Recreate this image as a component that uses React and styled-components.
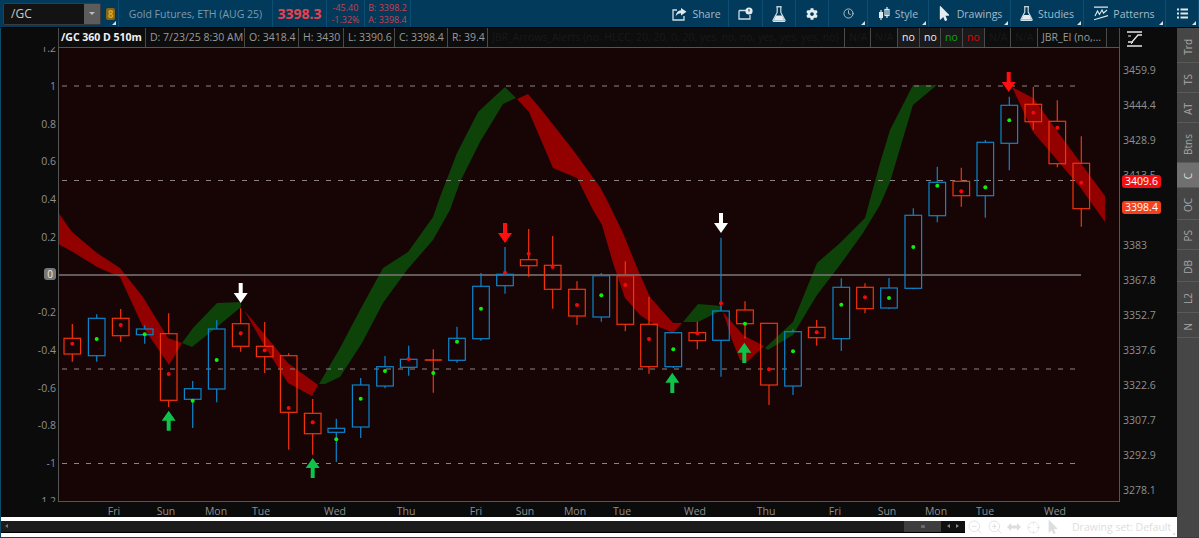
import React from "react";
import styled, { createGlobalStyle } from "styled-components";
import { FaCog, FaMousePointer } from "react-icons/fa";
import { ZoomIn, ZoomOut, Crosshair, Clock } from "lucide-react";

const GlobalStyle = createGlobalStyle`
  html, body { margin: 0; padding: 0; background: #0b0b0b; }
  body { font-family: "Open Sans", "Liberation Sans", sans-serif; overflow: hidden; }
  * { box-sizing: border-box; }
`;

const Page = styled.div`
  width: 1199px;
  height: 538px;
  display: flex;
  flex-direction: column;
  background: #0b0b0b;
  overflow: hidden;
  border-bottom: 1px solid #0b4a68;
`;

/* top toolbar */
const TopBar = styled.div`
  height: 27px;
  flex: none;
  display: flex;
  background: #013a5b;
`;

const Segment = styled.div`
  width: ${(p) => p.$w}px;
  flex: none;
  display: flex;
  align-items: center;
  justify-content: ${(p) => p.$justify || "center"};
  gap: ${(p) => p.$gap ?? 5}px;
  border-right: 1px solid #0d4e72;
  position: relative;
  color: #a4bac8;
  font-size: 10.5px;

  ${(p) =>
    p.$corner &&
    `&::after {
      content: "";
      position: absolute;
      right: 2px;
      bottom: 2px;
      border-left: 4px solid transparent;
      border-bottom: 4px solid #d5e0e6;
    }`}
`;

const Spacer = styled.div`
  flex: 1;
`;

const SymbolBox = styled.div`
  width: 98px;
  height: 22px;
  margin-left: 3px;
  display: flex;
  align-items: center;
  justify-content: space-between;
  background: #131313;
  border: 1px solid #3b3b3b;
  border-radius: 2px;
  padding-left: 7px;
  color: #c9c9c9;
  font-size: 12px;
`;

const SymbolDrop = styled.div`
  width: 16px;
  height: 20px;
  background: #5c5c5c;
  display: flex;
  align-items: center;
  justify-content: center;

  &::after {
    content: "";
    border-left: 3px solid transparent;
    border-right: 3px solid transparent;
    border-top: 3px solid #bcbcbc;
  }
`;

const LinkBadge = styled.div`
  width: 9px;
  height: 12px;
  background: #8a6512;
  border-radius: 2px;
  color: #d8a92c;
  font-size: 10px;
  font-weight: 700;
  line-height: 12px;
  text-align: center;
  margin-left: 5px;
`;

const Name = styled.span`
  color: #7d9aad;
  font-size: 10.5px;
  white-space: nowrap;
`;

const Price = styled.span`
  color: #e5434f;
  font-size: 14px;
  font-weight: 700;
`;

const Stack = styled.div`
  display: flex;
  flex-direction: column;
  align-items: center;
  color: #c9414f;
  font-size: 9px;
  line-height: 12px;
  white-space: nowrap;
`;

/* chart frame */
const Main = styled.div`
  flex: 1;
  min-height: 0;
  display: flex;
  border-top: 1px solid #000;
`;

const ChartPane = styled.div`
  flex: 1;
  min-width: 0;
  display: flex;
  flex-direction: column;
  border-left: 1px solid #0b4a68;
`;

const ChartBody = styled.div`
  height: 474px;
  flex: none;
  display: flex;
`;

const LeftAxis = styled.div`
  width: 57px;
  flex: none;
  height: 455px;
  margin-top: 19px;
  overflow: hidden;
`;

const LeftGrid = styled.div`
  display: grid;
  grid-auto-rows: 37.7px;
  margin-top: -17.5px;
  justify-items: end;
  align-items: center;
  padding-right: 2px;
`;

const AxisText = styled.span`
  color: #8f8f8f;
  font-size: 10.5px;
  line-height: 12px;
`;

const ZeroBadge = styled.span`
  color: #eee;
  background: #777;
  border-radius: 3px;
  font-size: 10px;
  line-height: 12px;
  padding: 0 3px;
`;

const Center = styled.div`
  width: 1062px;
  flex: none;
  display: flex;
  flex-direction: column;
`;

const Legend = styled.div`
  height: 19px;
  flex: none;
  display: flex;
  background: #0d0d0d;
`;

const Cell = styled.div`
  width: ${(p) => p.$w}px;
  flex: none;
  border-right: 1px solid #4a4a4a;
  border-left: ${(p) => (p.$first ? "1px solid #4a4a4a" : "none")};
  padding: 0 ${(p) => (p.$first ? 2 : 4)}px;
  font-size: 10.5px;
  line-height: 18px;
  font-weight: ${(p) => (p.$bold ? 700 : 400)};
  color: ${(p) => p.$color || "#9a9a9a"};
  background: ${(p) => p.$bg || "transparent"};
  text-align: ${(p) => p.$align || "left"};
  white-space: nowrap;
  overflow: hidden;
`;

const Plot = styled.div`
  height: 455px;
  flex: none;
  background: #170405;
  border: 1px solid #555;

  svg {
    display: block;
  }
`;

const RightAxis = styled.div`
  width: 57px;
  flex: none;
  position: relative;
  padding: 3px 0 0 3px;
`;

const ScaleIcon = styled.svg`
  display: block;
  width: 18px;
  height: 16px;
  margin: 0 0 5.5px 3px;
`;

const PriceGrid = styled.div`
  display: grid;
  grid-auto-rows: 35.04px;
  align-items: center;
`;

const PriceTag = styled.div`
  position: absolute;
  left: 2px;
  top: ${(p) => p.$top}px;
  width: 39px;
  height: 13px;
  border-radius: 3px;
  background: ${(p) => p.$bg};
  color: #fff;
  font-size: 10.5px;
  line-height: 13px;
  text-align: center;
`;

const SideTabs = styled.div`
  width: 22px;
  flex: none;
  display: flex;
  flex-direction: column;
  background: #464646;
`;

const SideTab = styled.div`
  height: ${(p) => p.$h}px;
  flex: none;
  display: flex;
  align-items: center;
  justify-content: center;
  padding-top: 3px;
  border-bottom: 1px solid #5a5a5a;
  background: ${(p) => (p.$active ? "#707070" : "transparent")};
  color: ${(p) => (p.$active ? "#ddd" : "#a8a8a8")};
  font-size: 10px;

  span {
    writing-mode: vertical-rl;
    transform: rotate(180deg);
  }
`;

const TimeAxis = styled.div`
  height: 15px;
  flex: none;
  display: flex;
  padding-left: 93px;
  background: #0b0b0b;
`;

const TimeTick = styled.span`
  width: 40px;
  flex: none;
  margin-right: ${(p) => p.$gap}px;
  text-align: center;
  color: #8f8f8f;
  font-size: 10.5px;
  line-height: 18px;
`;

const Footer = styled.div`
  height: 20px;
  flex: none;
  display: flex;
  align-items: flex-start;
  background: #fff;
  position: relative;

  &::after {
    content: "";
    position: absolute;
    right: 2px;
    bottom: 2px;
    border-left: 3px solid transparent;
    border-bottom: 3px solid #ddd;
  }
`;

const Scrollbar = styled.div`
  width: 964px;
  height: 12px;
  flex: none;
  margin-top: 3.5px;
  display: flex;
  align-items: stretch;
  background: #1c1c1c;
  border-bottom: 1px solid #000;
`;

const ScrollLeft = styled.div`
  flex: 1;
  padding: 3px 0 0 4px;

  &::after {
    content: "";
    display: block;
    width: 0;
    border-top: 2px solid transparent;
    border-bottom: 2px solid transparent;
    border-right: 3px solid #777;
  }
`;

const Thumb = styled.div`
  width: 37px;
  background: #3e3e3e;
  display: flex;
  align-items: center;
  justify-content: center;

  &::after {
    content: "";
    width: 4px;
    height: 3px;
    background: #6a6a6a;
  }
`;

const ScrollEnd = styled.div`
  width: 24px;
  background: #101010;
  display: flex;
  align-items: center;
  justify-content: center;
  gap: 6px;
`;

const Tri = styled.i`
  border-top: 2px solid transparent;
  border-bottom: 2px solid transparent;
  border-left: ${(p) => (p.$right ? "3px solid #888" : "0")};
  border-right: ${(p) => (p.$right ? "0" : "3px solid #888")};
`;

const Tools = styled.div`
  flex: 1;
  height: 20px;
  display: flex;
  align-items: center;
  gap: 4px;
  padding-left: 2px;
  color: #dedede;
`;

const ToolSlot = styled.span`
  display: flex;
  margin-left: ${(p) => p.$ml}px;
`;

const DrawingSet = styled.span`
  margin-left: 8px;
  font-size: 10.5px;
  color: #dedede;
  white-space: nowrap;
`;

const Glyph = styled.svg`
  display: block;
  flex: none;
`;

/* x, wick top, wick bottom, body top, body bottom, dot, up candle, green dot */
const candles = [
  [72.3, 324, 361.7, 338.3, 354, 343.7, 0, 0],
  [96.7, 314.3, 361.7, 318.3, 355.7, 339, 1, 1],
  [120.7, 309, 341.7, 318.3, 335.7, 325, 0, 0],
  [144.7, 325.3, 343.7, 329, 334.7, 334.3, 1, 1],
  [168.7, 313.3, 407, 333.7, 400.3, 374, 0, 0],
  [192.7, 381, 428, 388.7, 399.3, 400.7, 1, 1],
  [216.7, 320.3, 402.3, 329, 389, 360, 1, 1],
  [240.7, 308.3, 351.7, 323.7, 346.3, 333.3, 0, 0],
  [264.7, 322, 373, 346.3, 356.7, 350.3, 0, 0],
  [288.7, 353.3, 449.7, 355.7, 412.3, 408, 0, 0],
  [312.7, 399, 454.7, 413.3, 433.7, 422.3, 0, 0],
  [336.3, 418.7, 462, 428.3, 432.3, 439.3, 1, 1],
  [360.7, 378, 438, 385, 427, 398.7, 1, 1],
  [385, 356, 388.3, 366.7, 386, 371, 1, 1],
  [408.7, 345.7, 375.7, 359.3, 367.3, 359, 1, 0],
  [433.3, 349.3, 392.7, 360, 360, 373, 0, 1],
  [457, 326.7, 362.7, 338.3, 360.3, 341.7, 1, 1],
  [481, 273, 340.7, 286.3, 338.7, 308.7, 1, 1],
  [505, 247, 293.7, 274.3, 285.7, 272.7, 1, 0],
  [528.7, 229, 276.7, 259.7, 265.7, 253.7, 0, 0],
  [552.7, 236, 308.7, 265.3, 289.3, 267, 0, 0],
  [577, 281.3, 325, 289.3, 316, 305, 0, 0],
  [601.3, 273, 321.7, 275.7, 317, 295.3, 1, 1],
  [625.3, 261.3, 331.3, 275.7, 324.3, 285, 0, 0],
  [649, 296.7, 373.7, 324.3, 366.7, 339, 0, 0],
  [673.3, 332.7, 368, 332.7, 366.7, 349.3, 1, 1],
  [697.3, 321.7, 349.3, 332.7, 340.7, 333.3, 0, 0],
  [721, 237.7, 376.7, 311, 340.3, 303.3, 1, 0],
  [745, 301.3, 338.7, 310, 323.7, 323.7, 0, 1],
  [769, 323.3, 405, 323.3, 385, 369.3, 0, 0],
  [793, 329.3, 395, 331.7, 386, 351.3, 1, 1],
  [816.7, 320, 345.7, 327.3, 337.7, 332.3, 0, 0],
  [841.3, 278.3, 351, 287.3, 338.7, 304.7, 1, 1],
  [865, 283.3, 313.3, 287.3, 308.7, 297.3, 0, 0],
  [889, 278, 309, 288, 308, 298, 1, 1],
  [913.3, 208.3, 289.3, 215.3, 288.3, 247, 1, 1],
  [937.3, 166.7, 222.3, 182.3, 215.7, 185.7, 1, 1],
  [961.3, 167.7, 206.7, 181.3, 195.7, 191.3, 0, 0],
  [985.3, 140, 217.7, 142.3, 195.7, 187.3, 1, 1],
  [1009.3, 96.7, 170.3, 105.3, 143.3, 120.3, 1, 1],
  [1033.3, 87, 129.7, 104.3, 121.7, 112.7, 0, 0],
  [1057.3, 100.3, 167.3, 121.3, 163.7, 127.7, 0, 0],
  [1081.3, 136.3, 226.7, 163.3, 208.7, 182.7, 0, 0],
];

const redBands = [
  "58,212 72,232 97,253 120,268 143,297 168,338 182,343 169,365 143,327 120,277 97,267 73,252 58,244",
  "244,310 265,335 288,363 318,385 312,396 288,383 265,347",
  "517,99 528,94 540,108 573,150 600,187 607,200 623,233 638,270 650,297 673,323 682,323 673,333 655,325 640,315 625,298 613,263 602,225 593,210 577,178 553,168 529,112",
  "723,312 743,335 764,346 747,362 740,360 732,340",
  "1012,87 1033,98 1105,196 1105,222 1080,187 1057,160 1033,132",
];

const greenBands = [
  "182,343 193,328 217,303 241,302 241,307 217,327 192,347",
  "319,384 340,348 360,310 383,268 408,252 433,217 440,197 457,153 478,112 493,98 505,87 516,98 503,104 480,142 460,182 450,210 433,240 407,270 383,303 362,343 340,377 325,384",
  "683,322 698,304 722,306 722,310 698,322",
  "765,348 793,322 817,263 840,243 865,218 880,163 890,130 913,85 937,85 913,105 890,182 880,205 863,233 840,265 817,295 793,335 768,350",
];

const arrows = [
  [168.7, 410.7, 430.7, "up", "#0fc24a"],
  [312.7, 458, 478, "up", "#0fc24a"],
  [672.3, 372.7, 393, "up", "#0fc24a"],
  [744.3, 342.7, 363, "up", "#0fc24a"],
  [240.7, 283, 303, "down", "#ffffff"],
  [721, 213, 233, "down", "#ffffff"],
  [505, 223, 243, "down", "#ff0f0f"],
  [1008.7, 72, 92, "down", "#ff0f0f"],
];

const arrowPoints = (x, top, bottom, dir) => {
  if (dir === "up") {
    return `${x},${top} ${x + 7},${top + 10} ${x + 2},${top + 10} ${x + 2},${bottom} ${x - 2},${bottom} ${x - 2},${top + 10} ${x - 7},${top + 10}`;
  }
  return `${x - 2},${top} ${x + 2},${top} ${x + 2},${bottom - 10} ${x + 7},${bottom - 10} ${x},${bottom} ${x - 7},${bottom - 10} ${x - 2},${bottom - 10}`;
};

const Chart = () => (
  <svg width="1060" height="453" viewBox="59 48 1060 453">
    {redBands.map((pts) => (
      <polygon key={pts} points={pts} fill="#920000" />
    ))}
    {greenBands.map((pts) => (
      <polygon key={pts} points={pts} fill="#0d4208" />
    ))}
    {[86, 180.5, 369, 463.5].map((y) => (
      <line key={y} x1="62" x2="1078" y1={y} y2={y} stroke="#8a8484" strokeWidth="1" strokeDasharray="5 7" />
    ))}
    <line x1="59" x2="1081" y1="275" y2="275" stroke="#7d7878" strokeWidth="1.5" />
    {candles.map(([x, wt, wb, bt, bb, dot, up, green]) => {
      const color = up ? "#0b86cc" : "#f5330a";
      return (
        <g key={x}>
          <line x1={x} x2={x} y1={wt} y2={bt} stroke={color} strokeWidth="1.2" />
          <line x1={x} x2={x} y1={bb} y2={wb} stroke={color} strokeWidth="1.2" />
          {bt === bb ? (
            <line x1={x - 8.5} x2={x + 8.5} y1={bt} y2={bt} stroke={color} strokeWidth="1.6" />
          ) : (
            <rect x={x - 8.3} y={bt} width="16.6" height={bb - bt} fill="none" stroke={color} strokeWidth="1.2" />
          )}
          <circle cx={x} cy={dot} r="2" fill={green ? "#0cf00c" : "#f50a0a"} />
        </g>
      );
    })}
    {arrows.map(([x, top, bottom, dir, color]) => (
      <polygon key={x} points={arrowPoints(x, top, bottom, dir)} fill={color} />
    ))}
  </svg>
);

const ShareIcon = () => (
  <Glyph width="15" height="14" viewBox="0 0 15 14" fill="none">
    <path d="M5 3H1v10h11V9" stroke="#cfdbe2" strokeWidth="1.3" />
    <path d="M9 1l5.5 3.8L9 8.5V6.3C6.5 6.3 5 7.2 3.6 9.6 4 5.8 6 3.6 9 3.3z" fill="#dfe8ed" />
  </Glyph>
);

const PanelIcon = () => (
  <Glyph width="15" height="13" viewBox="0 0 15 13" fill="none">
    <path d="M1 3.5h9M1 3.5v8.500h11V8" stroke="#cfdbe2" strokeWidth="1.3" />
    <circle cx="11" cy="4" r="3.6" fill="#e4ecf0" />
    <path d="M11 2v2.600" stroke="#013a5b" strokeWidth="1" />
  </Glyph>
);

const FlaskIcon = ({ size = 15 }) => (
  <Glyph width={size - 2} height={size} viewBox="0 0 13 15" fill="none">
    <path d="M4 .7h5" stroke="#d6e1e7" strokeWidth="1.2" />
    <path d="M4.800 1v5L1 13.200c-.3.7 0 1.300.8 1.300h9.400c.8 0 1.100-.6.8-1.300L8.200 6V1" stroke="#d6e1e7" strokeWidth="1.1" />
    <path d="M3.600 9h5.800l2.200 4.800H1.400z" fill="#e4ecf0" />
  </Glyph>
);

const CandlesIcon = () => (
  <Glyph width="12" height="14" viewBox="0 0 12 14" fill="none">
    <path d="M3 3v10M9 0v11" stroke="#dfe8ed" strokeWidth="1.2" />
    <rect x="1" y="5" width="4" height="6" fill="#dfe8ed" />
    <rect x="7" y="2.500" width="4" height="6" fill="none" stroke="#dfe8ed" strokeWidth="1.2" />
  </Glyph>
);

const PatternIcon = () => (
  <Glyph width="14" height="15" viewBox="0 0 14 15" fill="none">
    <path d="M0 1.200h14M0 13.800L14 9.500" stroke="#dfe8ed" strokeWidth="1.2" />
    <path d="M1 10l2.500-5 2 3.500L8 4l1.500 3L13 4" stroke="#dfe8ed" strokeWidth="1.1" />
  </Glyph>
);

const ListIcon = () => (
  <Glyph width="11" height="11" viewBox="0 0 11 11" fill="#dfe8ed">
    <rect x="0" y="0.5" width="2" height="2" />
    <rect x="3.5" y="0.5" width="7.5" height="2" />
    <rect x="0" y="4.5" width="2" height="2" />
    <rect x="3.5" y="4.5" width="7.5" height="2" />
    <rect x="0" y="8.5" width="2" height="2" />
    <rect x="3.5" y="8.5" width="7.5" height="2" />
  </Glyph>
);

const PanIcon = () => (
  <Glyph width="14" height="10" viewBox="0 0 14 10" fill="#dedede">
    <path d="M0 5l4-4v2.500h6V1l4 4-4 4V6.500H4V9z" />
  </Glyph>
);

const leftLabels = ["1.2", "1", "0.8", "0.6", "0.4", "0.2", "0", "-0.2", "-0.4", "-0.6", "-0.8", "-1", "-1.2"];
const priceLabels = ["3459.9", "3444.4", "3428.9", "3413.5", "", "3383", "3367.8", "3352.7", "3337.6", "3322.6", "3307.7", "3292.9", "3278.1"];

const legendCells = [
  { w: 88, text: "/GC 360 D 510m", bold: true, color: "#f2f2f2", first: true },
  { w: 99, text: "D: 7/23/25 8:30 AM" },
  { w: 54, text: "O: 3418.4" },
  { w: 45, text: "H: 3430" },
  { w: 51, text: "L: 3390.6" },
  { w: 53, text: "C: 3398.4" },
  { w: 40, text: "R: 39.4" },
  { w: 357, text: "JBR_Arrows_Alerts (no, HLCC, 20, 20, 0, 20, yes, no, no, yes, yes, yes, no)", color: "#191919" },
  { w: 26, text: "N/A", color: "#191919" },
  { w: 27, text: "N/A", color: "#191919" },
  { w: 22, text: "no", color: "#eeeeee", bg: "#1a1a1a", align: "center" },
  { w: 21, text: "no", color: "#eeeeee", bg: "#1a1a1a", align: "center" },
  { w: 22, text: "no", color: "#0aa80a", bg: "#1a1a1a", align: "center" },
  { w: 22, text: "no", color: "#d00c0c", bg: "#1a1a1a", align: "center" },
  { w: 26, text: "N/A", color: "#191919" },
  { w: 27, text: "N/A", color: "#191919" },
  { w: 69, text: "JBR_EI (no,..." },
  { w: 13, text: "" },
];

const ticks = [
  ["Fri", 114], ["Sun", 166], ["Mon", 216], ["Tue", 261], ["Wed", 335], ["Thu", 406],
  ["Fri", 476], ["Sun", 525], ["Mon", 575], ["Tue", 622], ["Wed", 695], ["Thu", 766],
  ["Fri", 835], ["Sun", 887], ["Mon", 936], ["Tue", 985], ["Wed", 1055],
];

const tabs = [
  ["Trd", 35], ["TS", 30], ["AT", 30], ["Btns", 40], ["C", 25], ["OC", 32],
  ["PS", 30], ["DB", 32], ["L2", 31], ["N", 25],
];

const App = () => (
  <Page>
    <GlobalStyle />
    <TopBar>
      <Segment $w={119} $justify="flex-start" $gap={0} $corner>
        <SymbolBox>
          /GC
          <SymbolDrop />
        </SymbolBox>
        <LinkBadge>8</LinkBadge>
      </Segment>
      <Segment $w={154}>
        <Name>Gold Futures, ETH (AUG 25)</Name>
      </Segment>
      <Segment $w={54}>
        <Price>3398.3</Price>
      </Segment>
      <Segment $w={38}>
        <Stack>
          <span>-45.40</span>
          <span>-1.32%</span>
        </Stack>
      </Segment>
      <Segment $w={46}>
        <Stack>
          <span>B: 3398.2</span>
          <span>A: 3398.4</span>
        </Stack>
      </Segment>
      <Spacer />
      <Segment $w={64}>
        <ShareIcon />
        Share
      </Segment>
      <Segment $w={34}>
        <PanelIcon />
      </Segment>
      <Segment $w={33}>
        <FlaskIcon size={16} />
      </Segment>
      <Segment $w={33}>
        <FaCog size={12} color="#e4ecf0" />
      </Segment>
      <Segment $w={39} $corner>
        <Clock size={11} color="#b8c8d2" />
      </Segment>
      <Segment $w={61} $corner>
        <CandlesIcon />
        Style
      </Segment>
      <Segment $w={82} $corner $gap={5}>
        <FaMousePointer size={15} color="#e4ecf0" />
        Drawings
      </Segment>
      <Segment $w={73} $corner>
        <FlaskIcon />
        Studies
      </Segment>
      <Segment $w={82} $corner>
        <PatternIcon />
        Patterns
      </Segment>
      <Segment $w={33} $corner>
        <ListIcon />
      </Segment>
    </TopBar>
    <Main>
      <ChartPane>
        <ChartBody>
          <LeftAxis>
            <LeftGrid>
              {leftLabels.map((l) =>
                l === "0" ? <ZeroBadge key={l}>{l}</ZeroBadge> : <AxisText key={l}>{l}</AxisText>
              )}
            </LeftGrid>
          </LeftAxis>
          <Center>
            <Legend>
              {legendCells.map((c, i) => (
                <Cell key={i} $w={c.w} $bold={c.bold} $color={c.color} $bg={c.bg} $align={c.align} $first={c.first}>
                  {c.text}
                </Cell>
              ))}
            </Legend>
            <Plot>
              <Chart />
            </Plot>
          </Center>
          <RightAxis>
            <ScaleIcon viewBox="0 0 18 16" fill="none">
              <path d="M1 1h15M1 15h15" stroke="#e6e6e6" strokeWidth="1.5" />
              <path d="M2 11h4l6-7h4" stroke="#e6e6e6" strokeWidth="1.3" />
              <path d="M2 5h3M5 13l2-2" stroke="#e6e6e6" strokeWidth="1" />
            </ScaleIcon>
            <PriceGrid>
              {priceLabels.map((p, i) => (
                <AxisText key={i}>{p}</AxisText>
              ))}
            </PriceGrid>
            <PriceTag $top={147} $bg="#f50d12">3409.6</PriceTag>
            <PriceTag $top={173} $bg="#f5401f">3398.4</PriceTag>
          </RightAxis>
        </ChartBody>
        <TimeAxis>
          {ticks.map(([label, x], i) => (
            <TimeTick key={x} $gap={i < ticks.length - 1 ? ticks[i + 1][1] - x - 40 : 0}>
              {label}
            </TimeTick>
          ))}
        </TimeAxis>
        <Footer>
          <Scrollbar>
            <ScrollLeft />
            <Thumb />
            <ScrollEnd>
              <Tri />
              <Tri $right />
            </ScrollEnd>
          </Scrollbar>
          <Tools>
            <ZoomOut size={16} strokeWidth={1.3} />
            <ZoomIn size={16} strokeWidth={1.3} />
            <PanIcon />
            <ToolSlot $ml={2}>
              <Crosshair size={13} strokeWidth={1.3} />
            </ToolSlot>
            <ToolSlot $ml={2}>
              <FaMousePointer size={14} />
            </ToolSlot>
            <DrawingSet>Drawing set: Default</DrawingSet>
          </Tools>
        </Footer>
      </ChartPane>
      <SideTabs>
        {tabs.map(([t, h]) => (
          <SideTab key={t} $h={h} $active={t === "C"}>
            <span>{t}</span>
          </SideTab>
        ))}
      </SideTabs>
    </Main>
  </Page>
);

export default App;
